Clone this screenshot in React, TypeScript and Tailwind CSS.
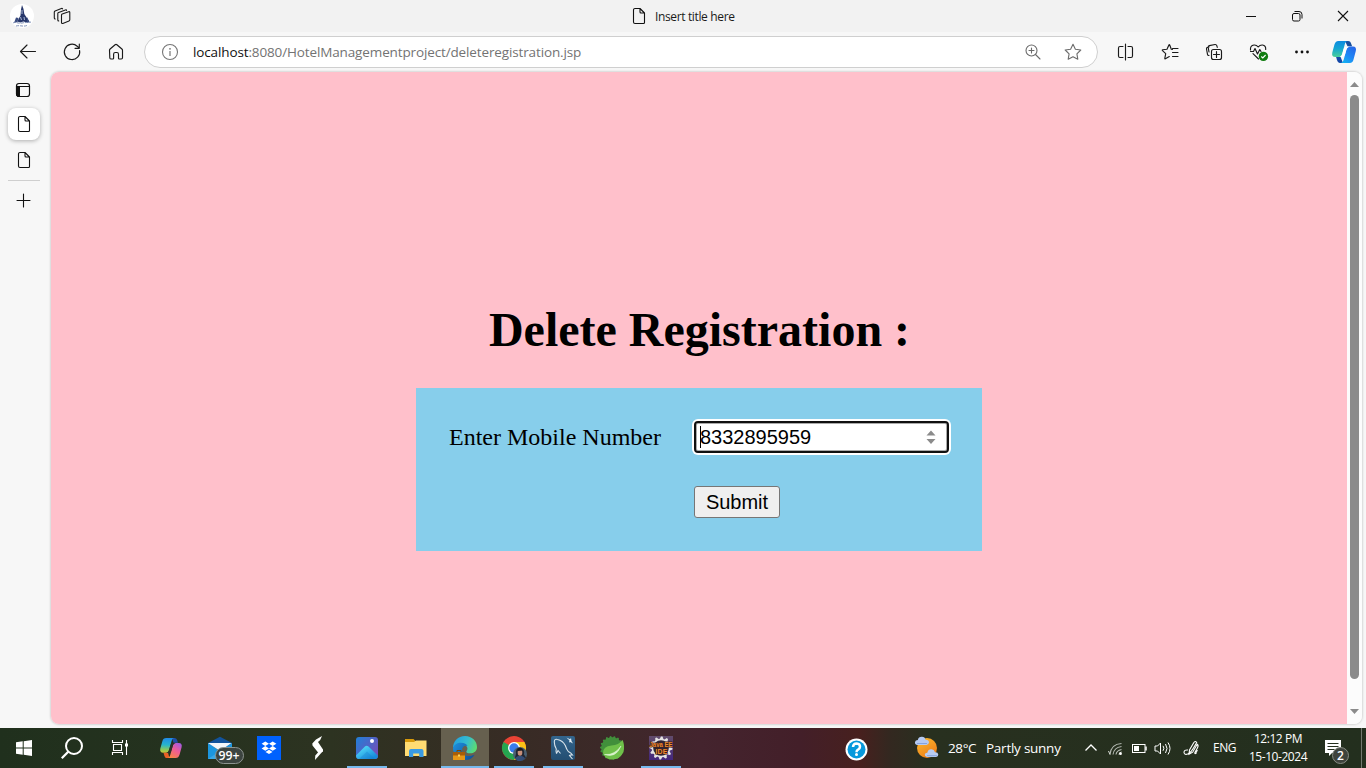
import type { ReactNode } from "react";

function Cell({ w, h, children, className = "" }: { w: number; h: number; children: ReactNode; className?: string }) {
  return (
    <svg width={w} height={h} viewBox={`0 0 ${w} ${h}`} fill="none" className={`block shrink-0 ${className}`}>
      {children}
    </svg>
  );
}

function DocIcon({ className = "" }: { className?: string }) {
  return (
    <Cell w={14} h={18} className={className}>
      <path d="M3 1.5h5l4.5 4.5v9.5a1 1 0 0 1-1 1H3a1.5 1.5 0 0 1-1.500-1.500V3A1.500 1.500 0 0 1 3 1.500zM8 1.500V5a1 1 0 0 0 1 1h3.500" stroke="#111" strokeWidth="1.1" strokeLinejoin="round" />
    </Cell>
  );
}

function TitleBar() {
  return (
    <header className="flex h-8 items-center bg-[#f2f2f2]">
      <Cell w={24} h={24} className="ml-[10px]">
        <circle cx="12" cy="12" r="12" fill="#fff" />
        <path d="M12 1l1.500 4 .8 5 2 3 3 4.500-2 1-4-1-3 1-3-1 1.500-3 1.700-3 .5-6z" fill="#27376b" />
        <path d="M6 13.500l2.500.5-1 4-3.500 1zM17 13l2.500 5-2.500 1z" fill="#3a4c80" />
        <path d="M12 6v4M10.500 13l1 3M14 13l.5 3" stroke="#b7c4dd" strokeWidth=".9" />
        <path d="M3 19c3-2 4 1 9 0s6 0 9-1M6 22c4-1 7 1 11-.5" stroke="#8394ba" strokeWidth="1" strokeDasharray="3 1" />
      </Cell>
      <Cell w={18} h={18} className="ml-[19px]">
        <g stroke="#1a1a1a" strokeWidth="1.1" strokeLinejoin="round" strokeLinecap="round">
          <path d="M9.200 7.100l6.500-2.400q1.100-.3 1.100.9v7.200q0 .8-.8 1.100l-6.200 2.500q-1.300.4-1.300-.9V8.200q0-.8.7-1.100z" />
          <path d="M5.700 13.900q-.9 0-.9-1V6.500q0-.8.8-1.100l6.800-2.500q.9-.3 1.100.5" />
          <path d="M2.300 12q-1-.1-1-1.100V5q0-.8.8-1.100l6.300-2.400q.9-.3 1.200.4" />
        </g>
      </Cell>
      <div className="ml-[561px] flex w-[120px] items-center">
        <DocIcon />
        <span className="ml-[9px] whitespace-nowrap pt-[2px] font-['Open_Sans','Noto_Sans',sans-serif] text-[12px] leading-4 tracking-[-0.36px] text-[#1a1a1a]">Insert title here</span>
      </div>
      <div className="ml-auto flex">
        <Cell w={46} h={32}><path d="M18 16.500h10" stroke="#111" /></Cell>
        <Cell w={46} h={32}>
          <rect x="18.500" y="13.500" width="7.500" height="7.500" rx="1.500" stroke="#111" />
          <path d="M20.500 11.500h4.500a3 3 0 0 1 3 3v4" stroke="#111" />
        </Cell>
        <Cell w={46} h={32}><path d="M18 11l10 10M28 11L18 21" stroke="#111" strokeWidth="1.1" /></Cell>
      </div>
    </header>
  );
}

function EdgeCopilot() {
  return (
    <Cell w={44} h={40} className="-ml-[2px]">
      <defs>
        <linearGradient id="ca" x1="14" y1="9" x2="14" y2="26" gradientUnits="userSpaceOnUse">
          <stop stopColor="#0c8ae0" /><stop offset=".45" stopColor="#15a5d2" /><stop offset="1" stopColor="#4fd492" />
        </linearGradient>
        <linearGradient id="cb" x1="32" y1="15" x2="20" y2="31" gradientUnits="userSpaceOnUse">
          <stop stopColor="#2667e8" /><stop offset=".5" stopColor="#1f86f5" /><stop offset="1" stopColor="#12b8f2" />
        </linearGradient>
      </defs>
      <path d="M23 9h3c2 0 2.700 1.200 3.300 3l.8 2.200h-4.600z" fill="#174f9e" />
      <path d="M16.500 9H26c-2 0-2.700 1.500-3.400 4l-2.500 9c-.6 2-1.800 3.100-3.800 3.100h-2.700c-3 0-4-1.700-3.300-4.600l2.100-7.700C13.100 10.300 14.200 9 16.500 9z" fill="url(#ca)" />
      <path d="M21 31h-3c-1.700 0-2.500-1.300-3.100-3.200l-.8-2.700h4.500z" fill="#1447a8" />
      <path d="M27.800 31h-9.600c2 0 3-1.600 3.600-3.800l2.600-9.300c.6-2.100 1.700-3.400 3.800-3.400h2.700c2.700 0 3.600 1.800 2.900 4.600l-2.200 8.100c-.7 2.500-1.700 3.800-3.800 3.800z" fill="url(#cb)" />
      <path d="M23.200 15h4c-1.700.3-2.500 1.400-3 3l-1.100 4c-.5 1.700-1.400 2.700-3 3h-2.500c1.600-.5 2.200-1.500 2.700-3.100l1.200-4.300c.4-1.300.8-2 1.700-2.600z" fill="#fff" />
    </Cell>
  );
}

const iconStroke = { stroke: "#1a1a1a", strokeWidth: 1.15, strokeLinecap: "round", strokeLinejoin: "round" } as const;

function Toolbar() {
  return (
    <nav className="flex h-10 items-center bg-[#f7f7f7]">
      <Cell w={44} h={40} className="ml-[6px]"><path d="M29.500 19.500H14.500M21 13l-6.500 6.500L21 26" {...iconStroke} /></Cell>
      <Cell w={44} h={40}><path d="M29.600 18.500a7.700 7.700 0 1 1-2.400-4.300l1.900 1.800M29.300 12v4.300h-4.300" {...iconStroke} /></Cell>
      <Cell w={44} h={40}><path d="M15.500 18.300q0-.8.6-1.300l5-4.200q.9-.7 1.800 0l5 4.200q.6.5.6 1.300v7.500q0 1.200-1.200 1.200h-2.100q-.7 0-.7-.8v-4q0-1.700-1.700-1.700h-1.500q-1.700 0-1.700 1.700v4q0 .8-.8.8h-2q-1 0-1-1.200z" {...iconStroke} /></Cell>
      <div className="ml-[6px] flex h-8 w-[954px] shrink-0 items-center rounded-full border border-[#cfcfcf] bg-white pl-4">
        <Cell w={18} h={18}>
          <circle cx="9" cy="9" r="7.500" stroke="#767676" strokeWidth="1.100" />
          <path d="M9 8v5" stroke="#767676" strokeWidth="1.200" /><circle cx="9" cy="5.800" r=".9" fill="#767676" />
        </Cell>
        <span className="ml-[14px] w-[821px] whitespace-nowrap font-['Open_Sans','Noto_Sans',sans-serif] text-[13.5px] leading-5 tracking-[-0.13px] text-[#737373]"><span className="text-[#111]">localhost</span>:8080/HotelManagementproject/deleteregistration.jsp</span>
        <Cell w={18} h={18} className="ml-[10px]">
          <g stroke="#6b6b6b" strokeWidth="1.1" strokeLinecap="round"><circle cx="7.500" cy="7.500" r="5.500" /><path d="M11.500 11.500l4.500 4.500M5 7.500h5M7.500 5v5" /></g>
        </Cell>
        <Cell w={18} h={18} className="ml-[22px]">
          <path d="M9 1.300l2.400 4.900 5.400.8-3.900 3.800.9 5.400L9 13.700l-4.800 2.500.9-5.400L1.200 7l5.400-.8z" stroke="#6b6b6b" strokeWidth="1.100" strokeLinejoin="round" />
        </Cell>
      </div>
      <Cell w={44} h={40} className="ml-[6px]"><path d="M21.500 12v16M19 14.500h-3q-1.500 0-1.500 1.500v8q0 1.500 1.500 1.500h3M24 14.500h3q1.500 0 1.500 1.500v8q0 1.500-1.500 1.500h-3" {...iconStroke} /></Cell>
      <Cell w={44} h={40}><path d="M24.500 17.500l-1.200-.2L21.700 13q-.4-.7-.8 0l-1.900 4.300-4.300.5q-.8.200-.2.800l3.200 3-.9 4.700q-.1.800.6.500l3.900-2.200M24.500 16.500h5.500M24.500 20.500h5.500M24.500 24.500h5.500" {...iconStroke} /></Cell>
      <Cell w={44} h={40}>
        <rect x="19.500" y="17.500" width="10" height="10" rx="2" {...iconStroke} />
        <path d="M24.500 19.500v6M21.500 22.500h6M17 23.500q-1.200.2-1.500-1.200l-1-5.300q-.2-1.400 1.100-1.700l1.400-.4M17 20l-.8-4.700q-.1-1.400 1.200-1.700l5.600-1.100q1.400-.2 1.800 1.100l.5 1.700" {...iconStroke} />
      </Cell>
      <Cell w={44} h={40}>
        <path d="M22.500 27l-5.500-5.300M14.500 18q-.5-4.500 3.500-5 2.500-.2 4.200 2 1.700-2.200 4.300-2 3.500.5 3.200 4.500M14.500 19.500h3l1.500-3 2.500 5.500 2.300-4.500 1.200 2" {...iconStroke} />
        <circle cx="27.400" cy="24.400" r="4.700" fill="#107c10" /><path d="M25.300 24.500l1.500 1.500 2.800-3" stroke="#fff" strokeWidth="1.100" />
      </Cell>
      <Cell w={44} h={40}><g fill="#111"><circle cx="16.500" cy="20" r="1.400" /><circle cx="22" cy="20" r="1.400" /><circle cx="27.500" cy="20" r="1.400" /></g></Cell>
      <EdgeCopilot />
    </nav>
  );
}

function Sidebar() {
  return (
    <aside className="flex w-[50px] flex-col pl-2">
      <Cell w={32} h={32} className="mt-[2px]">
        <rect x="8.500" y="9.500" width="13" height="13" rx="2.500" stroke="#111" strokeWidth="1.200" />
        <path d="M8.500 12.500h3v10h-1q-2 0-2-2zM8.500 12.500h13" fill="#111" stroke="#111" />
      </Cell>
      <div className="mt-[2px] flex size-8 items-center justify-center rounded-lg bg-white shadow-[0_1px_4px_rgba(0,0,0,0.3)]"><DocIcon /></div>
      <div className="mt-1 flex size-8 items-center justify-center"><DocIcon /></div>
      <div className="mt-1 h-px w-8 bg-[#cfcfcf]" />
      <Cell w={32} h={40}><path d="M9 19.500h13M15.500 13v13" stroke="#111" strokeWidth="1.100" strokeLinecap="round" /></Cell>
    </aside>
  );
}

function Scrollbar() {
  return (
    <div className="flex w-[15px] flex-col items-center bg-[#fcfcfc]">
      <Cell w={15} h={23}><path d="M3 15l4.500-5 4.500 5z" fill="#8b8b8b" /></Cell>
      <div className="h-[584px] w-[9px] rounded-full bg-[#8b8b8b]" />
      <Cell w={15} h={45}><path d="M3 30h9l-4.500 5z" fill="#8b8b8b" /></Cell>
    </div>
  );
}

function DeleteForm() {
  return (
    <main className="flex flex-1 flex-col items-center bg-[#ffc0cb] pt-[230px] text-black">
      <h1 className="pl-px font-['Liberation_Serif',serif] text-[48px] leading-[56px] font-bold">Delete Registration :</h1>
      <form className="mt-[30px] grid h-[163px] w-[566px] grid-cols-[245px_255px] content-start gap-y-[33px] bg-[#87ceeb] pt-[33px] pl-[33px]">
        <label htmlFor="mobile" className="font-['Liberation_Serif',serif] text-[24px] leading-8">Enter Mobile Number</label>
        <div className="flex h-8 items-center rounded-[4px] border-2 border-[#101010] bg-white pr-[10px] pl-1 shadow-[0_0_0_2px_#fff,inset_0_0_0_1px_#aaa]">
          <span className="h-[22px] w-px bg-black" />
          <input id="mobile" readOnly value="8332895959" className="-ml-px h-7 w-[225px] bg-transparent font-['Liberation_Sans',sans-serif] text-[20px] outline-none" />
          <Cell w={12} h={16}><path d="M1.500 6.500L6 1.500l4.500 5zM1.500 10h9L6 15z" fill="#8b8b8b" /></Cell>
        </div>
        <button type="button" className="col-start-2 h-8 w-[86px] rounded-[3px] border border-[#767676] bg-[#efefef] font-['Liberation_Sans',sans-serif] text-[20px] leading-7">Submit</button>
      </form>
    </main>
  );
}

function Task({ children, active, bar }: { children: ReactNode; active?: boolean; bar?: boolean }) {
  return (
    <div className={active ? "mr-px flex h-10 w-12 overflow-hidden bg-[#66604f]" : "flex h-10 w-[49px]"}>
      <Cell w={49} h={40}>
        {children}
        {active && <rect y="38" width="48" height="2" fill="#76b9ed" />}
        {bar && <rect x="4" y="38" width="40" height="2" fill="#76b9ed" />}
      </Cell>
    </div>
  );
}

function gear(cx: number, cy: number, r1: number, r2: number, n: number) {
  const pts: string[] = [];
  for (let i = 0; i < n * 4; i++) {
    const a = (i / (n * 4)) * Math.PI * 2;
    const r = i % 4 < 2 ? r2 : r1;
    pts.push(`${(cx + r * Math.cos(a)).toFixed(2)},${(cy + r * Math.sin(a)).toFixed(2)}`);
  }
  return pts.join(" ");
}

function Taskbar() {
  return (
    <footer className="flex h-10 bg-[linear-gradient(90deg,#20301d_0px,#25321f_180px,#2d3321_330px,#352d23_470px,#3c2928_600px,#44242e_700px,#431f29_800px,#47201e_860px,#332820_890px,#28301f_930px,#232f1e_1366px)] font-['Open_Sans','Noto_Sans',sans-serif] text-white">
      <Cell w={48} h={40}><path d="M16 14.300l6.700-1v6.200H16zM23.700 13.200l8.300-1.200v7.500h-8.300zM16 20.500h6.700v6.300l-6.700-1zM23.700 20.500H32V28l-8.300-1.200z" fill="#fff" /></Cell>
      <Cell w={48} h={40}><circle cx="26" cy="18" r="8" stroke="#fff" strokeWidth="2" /><path d="M20.200 23.800l-6.400 6.400" stroke="#fff" strokeWidth="2.300" /></Cell>
      <Cell w={48} h={40}>
        <path d="M16.500 12v2.500h10V12M17.500 16.500h8v6h-8zM16.500 27v-2.500h10V27M30.500 12v15" stroke="#fff" strokeWidth="1.100" />
        <rect x="29" y="15.500" width="3" height="3" fill="#fff" />
      </Cell>
      <div className="flex pl-[3px]">
        <Task>
          <defs>
            <linearGradient id="ta" x1="18" y1="10" x2="17" y2="27" gradientUnits="userSpaceOnUse"><stop stopColor="#218be8" /><stop offset=".4" stopColor="#26b5cd" /><stop offset=".7" stopColor="#8fca55" /><stop offset="1" stopColor="#f4c32d" /></linearGradient>
            <linearGradient id="tb" x1="32" y1="15" x2="23" y2="30" gradientUnits="userSpaceOnUse"><stop stopColor="#a35ae0" /><stop offset=".45" stopColor="#ee5c96" /><stop offset="1" stopColor="#f8873f" /></linearGradient>
          </defs>
          <path d="M25 10h2.500c1.600 0 2.300 1 2.800 2.600l.7 2.200h-4.500z" fill="#204da6" />
          <path d="M19.300 10h8.200c-1.700 0-2.400 1.200-3 3.300l-2.400 8.500c-.6 2-1.500 3-3.300 3h-2.600c-2.500 0-3.500-1.700-2.900-4.200l2-7.200c.7-2.400 1.800-3.400 4-3.400z" fill="url(#ta)" />
          <path d="M22.500 30H20c-1.600 0-2.200-1-2.700-2.600l-.8-2.600H21z" fill="#e96025" />
          <path d="M28.700 30h-8.500c1.700 0 2.600-1.300 3.100-3.200l2.400-8.600c.5-1.900 1.500-3.200 3.300-3.200h2.800c2.500 0 3.500 1.700 2.800 4.200l-2 7.300c-.7 2.500-1.900 3.500-3.900 3.500z" fill="url(#tb)" />
          <path d="M25.400 15h3c-1.700.4-2.300 1.500-2.700 3l-1.200 4c-.4 1.700-1.300 2.600-3 2.900h-1.800c1.500-.5 2-1.600 2.400-3.100l1.200-4.100c.4-1.400 1-2.300 2.100-2.700z" fill="#29322a" />
        </Task>
        <Task>
          <path d="M12 15l12-6.300L36 15v4H12z" fill="#12539c" />
          <path d="M12 15v16h24V15l-12 8z" fill="#1c96df" /><path d="M12 31l12-8 12 8z" fill="#3aa7e6" /><path d="M12 15h23.500L24 23z" fill="#f4f7fa" />
          <rect x="19.500" y="19.500" width="28" height="16" rx="8" fill="#3c4440" stroke="#8d9490" />
          <text x="22.500" y="31.500" fill="#fff" fontSize="12" fontWeight="600" fontFamily="Open Sans" textLength="21" lengthAdjust="spacingAndGlyphs">99+</text>
        </Task>
        <Task>
          <rect x="12" y="8" width="24" height="24" fill="#0061fe" />
          <path d="M20.300 13.500l3.700 2.300-3.700 2.300-3.700-2.300zM27.700 13.500l3.700 2.300-3.700 2.300-3.700-2.300zM20.300 18.100l3.700 2.300-3.700 2.300-3.700-2.300zM27.700 18.100l3.700 2.300-3.700 2.300-3.700-2.300zM24 21.700l3.500 2.200-3.500 2.200-3.500-2.200z" fill="#fff" />
        </Task>
        <Task>
          <g fill="#fff">
            <path d="M28 8l-6 3.500-3.700 4 .2 2 6 7.500 4.500-1.500v-2l-5-7.500 2.200-2z" />
            <path d="M29 23l-8 9 .3-4.500 4-4.500z" />
          </g>
        </Task>
        <Task bar>
          <defs><linearGradient id="pa" x1="13" y1="9" x2="35" y2="26" gradientUnits="userSpaceOnUse"><stop stopColor="#2080d8" /><stop offset="1" stopColor="#764db7" /></linearGradient><linearGradient id="pb" x1="20" y1="17" x2="28" y2="31" gradientUnits="userSpaceOnUse"><stop stopColor="#55dcf8" /><stop offset="1" stopColor="#168bdc" /></linearGradient></defs>
          <rect x="13" y="9" width="22" height="22" rx="3" fill="url(#pa)" />
          <path d="M13 27.500l9.200-9.200q1.500-1.300 3 0l9.800 9.500q-.3 3.200-3 3.200H16q-2.800 0-3-3.500z" fill="url(#pb)" /><path d="M16 31l8-7.500 8 7.500z" fill="#1376ca" opacity=".3" />
          <circle cx="29" cy="13" r="2" fill="#fff" /><rect x="35" y="38" width="9" height="2" fill="#557b9d" />
        </Task>
        <Task>
          <path d="M13 11h8.500l2 2H34v4H13z" fill="#d99a0b" /><path d="M13 14h9l2-1.500h10.500V28H13z" fill="#ffdc73" />
          <path d="M17 29v-6q0-2 2-2h10.500q2 0 2 2v6h-4.300v-3.500h-6V29z" fill="#399ae3" />
        </Task>
        <Task active>
          <defs>
            <linearGradient id="ea" x1="14" y1="11" x2="36" y2="20" gradientUnits="userSpaceOnUse"><stop stopColor="#24a3df" /><stop offset=".5" stopColor="#35bccf" /><stop offset="1" stopColor="#5fdf6a" /></linearGradient>
            <linearGradient id="eb" x1="13" y1="18" x2="31" y2="31" gradientUnits="userSpaceOnUse"><stop stopColor="#1c8bd9" /><stop offset="1" stopColor="#11529b" /></linearGradient>
          </defs>
          <path d="M12 20C12 13 17 8 24 8s12 5 12 11c0 4-3 6.300-6.700 6.300-3 0-4.700-1.200-3.700-2.400 2.400-3-.5-7-5-7-4 0-7 1.500-8.600 4.100z" fill="url(#ea)" />
          <path d="M12 20c1-3.300 4-5.300 8-5.300 3.500 0 5.700 1.300 6.500 3.300-3-1-5.500 1-5.500 4.500 0 4 4 6 8 5.500 2-.3 3.700-1 4.700-1.500C31.500 30.300 28.500 32 24 32c-7 0-12-5-12-12z" fill="url(#eb)" />
          <rect x="12" y="24" width="12" height="8" fill="#e79717" /><path d="M12 24h12v3.500H12z" fill="#a85d08" /><path d="M16 24v-1.500h4V24" stroke="#7c4708" /><rect x="17" y="26.500" width="2" height="2" fill="#ffd45a" />
        </Task>
        <Task bar>
          <circle cx="24" cy="20" r="12" fill="#ea4335" />
          <path d="M24 20L13.600 14A12 12 0 0 0 24 32l5.200-9z" fill="#25a650" /><path d="M24 14h10.400A12 12 0 0 1 24 32l5.200-9z" fill="#fbc116" />
          <circle cx="24" cy="20" r="6" fill="#fff" /><circle cx="24" cy="20" r="4.700" fill="#397cec" />
          <circle cx="30" cy="26" r="7" fill="#4a6072" /><path d="M26 26q-1-6 4-6.500 5 .5 4 7l2 3-4 3h-4l-3-3z" fill="#222632" />
          <ellipse cx="30" cy="24.500" rx="2.300" ry="3.200" fill="#c78f7a" /><path d="M25 31q1-3 4-3h3q3 1 3 3l-4 2h-3z" fill="#344d76" /><path d="M27.500 23q0-3 2.500-3t3 2.500z" fill="#16191f" />
        </Task>
        <Task bar>
          <defs><linearGradient id="my" x1="24" y1="8" x2="24" y2="32" gradientUnits="userSpaceOnUse"><stop stopColor="#33658d" /><stop offset="1" stopColor="#234e72" /></linearGradient></defs>
          <rect x="12" y="8" width="24" height="24" rx="2" fill="url(#my)" />
          <path d="M17.500 25.500q-1-2-.2-4.500-2-3.500-2-7 0-3.500 3-2.500 5.500 1 8 6 1.300 4 3 6 3 1.500 4.200 3.500-2-.3-3 .5l3 3.500M17.500 25.500l1.500-3 2.500 3" stroke="#d9e4eb" strokeWidth="1.100" />
          <path d="M27.500 9.500l3.500 1.800 1-1.300.5 3 1.500 2.500-2.800-1.500-1.200.5.500-2z" fill="#e6eff5" />
        </Task>
        <Task>
          <polygon points={gear(24, 20, 10.700, 12, 18)} fill="#418f3b" />
          <path d="M34.700 12q-4 5-11.200 5.500-8.500.8-8.500 7.500 1 5.500 8 6.500 9 .5 12.500-7.500 1.500-6-.8-12z" fill="#6fc04a" />
          <path d="M16.500 26.500q10 1 16.500-8.500-5 12.500-16.500 8.500z" fill="#d6f2c8" stroke="#e3f6d9" strokeWidth=".5" />
        </Task>
        <Task bar>
          <defs><linearGradient id="ec" x1="24" y1="8" x2="24" y2="32" gradientUnits="userSpaceOnUse"><stop stopColor="#624c6b" /><stop offset="1" stopColor="#44277d" /></linearGradient></defs>
          <rect x="12" y="8" width="24" height="24" fill="url(#ec)" /><polygon points={gear(24, 20, 9.300, 11.500, 12)} fill="#e6e4e3" /><circle cx="24" cy="20" r="7.800" fill="#302539" />
          <g fill="#f08a32" stroke="#3d2018" strokeWidth="1.200" paintOrder="stroke" fontFamily="Liberation Sans" fontWeight="700"><text x="12.500" y="19.300" fontSize="7.500" textLength="23" lengthAdjust="spacingAndGlyphs">Java EE</text><text x="18.500" y="25.800" fontSize="7" textLength="12">IDE</text></g>
        </Task>
      </div>
      <Cell w={48} h={40} className="ml-[146px]">
        <circle cx="24.500" cy="21.500" r="11" fill="#fff" /><circle cx="24.500" cy="21.500" r="9" fill="#0799dc" />
        <path d="M21 19q.2-3.500 3.700-3.500 3.400.2 3.300 3.200 0 1.800-2 3-1.500.8-1.500 2.500" stroke="#fff" strokeWidth="2.500" /><circle cx="24.500" cy="26.600" r="1.500" fill="#fff" />
      </Cell>
      <Cell w={26} h={40} className="ml-[34px]">
        <defs><linearGradient id="sun" x1="8" y1="10" x2="20" y2="30" gradientUnits="userSpaceOnUse"><stop stopColor="#fbb52b" /><stop offset="1" stopColor="#ec7818" /></linearGradient></defs>
        <circle cx="13" cy="20" r="10" fill="url(#sun)" />
        <path d="M3.500 17q-3-.5-2.500-3 .5-2 2.800-2 .8-3.500 4.200-3.300 3 .2 3.500 3 3.300-.2 3.500 2.500 0 2.300-2.500 2.800z" fill="#b5c9f1" /><path d="M3 15.500h10" stroke="#86a3dc" />
        <path d="M13 29q-2.500-.5-2.200-2.700.5-1.700 2.500-1.600.8-3.500 4-3.400 3 .2 3.700 3 3-.2 3.300 2.200 0 2.300-2.300 2.500z" fill="#b8ccf2" /><path d="M13 27.700h10" stroke="#86a3dc" />
      </Cell>
      <div className="ml-2 flex w-[128px] items-center whitespace-pre text-[13.5px]"><span className="w-[38px] tracking-[-0.4px]">28°C</span><span className="tracking-[-0.25px]">Partly sunny</span></div>
      <Cell w={28} h={40}><path d="M9.500 22.500L15 17l5.500 5.500" stroke="#fff" strokeWidth="1.300" /></Cell>
      <Cell w={22} h={40}>
        <g stroke="#b6bbb4" strokeWidth="1.100"><path d="M6 26.500Q7 16 17.500 15.500M9 26.500q1-7 8.500-8M12 26.500q.5-4 5.500-5" /></g><path d="M6 26.500L4.500 23M15 26.500q0-2 2.500-2.500" stroke="#d8dcd6" /><circle cx="16.500" cy="25.700" r="1.400" fill="#fff" />
      </Cell>
      <Cell w={22} h={40}><rect x="6.500" y="16.500" width="12.500" height="8" stroke="#fff" /><path d="M20 18.500v4" stroke="#fff" strokeWidth="1.500" /><path d="M8 18h5v5H8z" fill="#fff" /></Cell>
      <Cell w={26} h={40} className="ml-px"><path d="M6 18h2.500l3-3v11l-3-3H6zM14 17.800q1.800 2.500 0 5M16.500 16q3 4.500 0 9M19 14.500q4 6 0 12" stroke="#fff" strokeWidth="1" /></Cell>
      <Cell w={28} h={40} className="ml-[4px]"><path d="M9 22q-4-.5-4 2.500.5 3 4.200 1.300 3.300-2 5-5.300l3.500-6q-1.500-2-3 .3l-4.200 7.200-.5 4.300 3.700-2.100 4.500-8q1.700 1.200.2 3.800l-2.500 4.500q-.5 1.700 1.200.8 0-3 1.800-2.500" stroke="#fff" strokeWidth="1.100" /></Cell>
      <span className="ml-[2px] flex w-[31px] items-center justify-center text-[12px] tracking-[-0.5px]">ENG</span>
      <div className="flex w-[76px] flex-col items-center pt-[2px] text-[12px] leading-[18px] tracking-[-0.45px] whitespace-nowrap"><span>12:12 PM</span><span>15-10-2024</span></div>
      <Cell w={44} h={40} className="ml-auto">
        <path d="M3 12h16v13h-9l-3 3v-3H3z" fill="#fff" /><path d="M5.500 15.500h11M5.500 18.500h11M5.500 21.500h7" stroke="#26301f" />
        <circle cx="18.500" cy="27.500" r="8" fill="#3f443d" stroke="#888d84" /><text x="15" y="32" fill="#fff" fontFamily="Open Sans" fontWeight="600" fontSize="12">2</text><path d="M39.500 0v40" stroke="#737a70" />
      </Cell>
    </footer>
  );
}

export default function App() {
  return (
    <div className="flex h-[768px] w-[1366px] flex-col overflow-hidden bg-[#f7f7f7]">
      <TitleBar />
      <Toolbar />
      <div className="flex h-[656px]">
        <Sidebar />
        <div className="ml-px flex h-[652px] w-[1311px] overflow-hidden rounded-[8px] shadow-[0_0_2px_1px_rgba(0,0,0,0.13)]">
          <DeleteForm />
          <Scrollbar />
        </div>
      </div>
      <Taskbar />
    </div>
  );
}
